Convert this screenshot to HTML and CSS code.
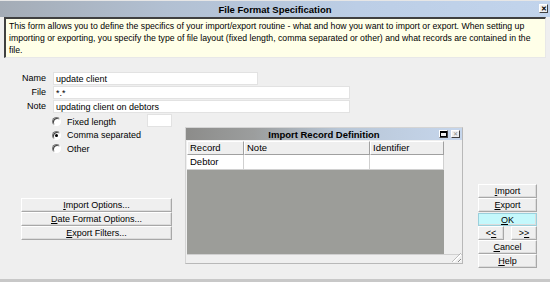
FILE: index.html
```html
<!DOCTYPE html>
<html>
<head>
<meta charset="utf-8">
<link rel="stylesheet" href="styles.css">
</head>
<body>
<div class="window">
  <div class="titlebar">
    <span class="title">File Format Specification</span>
    <span class="close">&#x2715;</span>
  </div>
  <div class="desc">This form allows you to define the specifics of your import/export routine - what and how you want to import or export. When setting up importing or exporting, you specify the type of file layout (fixed length, comma separated or other) and what records are contained in the file.</div>

  <div class="fields">
    <div class="frow"><span class="lbl">Name</span><span class="inp w-name">update client</span></div>
    <div class="frow"><span class="lbl">File</span><span class="inp w-long">*.*</span></div>
    <div class="frow"><span class="lbl">Note</span><span class="inp w-long">updating client on debtors</span></div>
  </div>

  <div class="lower">
    <div class="leftcol">
      <div class="radios">
        <div class="rrow"><span class="radio"></span><span class="rtext">Fixed length</span><span class="inp small"></span></div>
        <div class="rrow"><span class="radio on"></span><span class="rtext">Comma separated</span></div>
        <div class="rrow"><span class="radio"></span><span class="rtext">Other</span></div>
      </div>
      <div class="optbtns">
        <div class="btn"><u>I</u>mport Options...</div>
        <div class="btn"><u>D</u>ate Format Options...</div>
        <div class="btn"><u>E</u>xport Filters...</div>
      </div>
    </div>

    <div class="child">
      <div class="ctitle">
        <span class="ctext">Import Record Definition</span>
        <span class="cicons"><span class="ico restore"></span><span class="ico x">&#x2715;</span></span>
      </div>
      <div class="cbody">
        <div class="grid">
          <div class="ghead">
            <span class="c1">Record</span><span class="c2">Note</span><span class="c3">Identifier</span>
          </div>
          <div class="grow">
            <span class="c1">Debtor</span><span class="c2"></span><span class="c3"></span>
          </div>
          <div class="gempty"></div>
        </div>
        <div class="cfoot"><span class="grip"></span></div>
      </div>
    </div>

    <div class="rightcol">
      <div class="btn"><u>I</u>mport</div>
      <div class="btn"><u>E</u>xport</div>
      <div class="btn ok"><u>O</u>K</div>
      <div class="pair"><div class="btn half">&lt;<u>&lt;</u></div><div class="btn half">&gt;<u>&gt;</u></div></div>
      <div class="btn"><u>C</u>ancel</div>
      <div class="btn"><u>H</u>elp</div>
    </div>
  </div>
</div>
</body>
</html>
```

FILE: styles.css
```css
* { box-sizing: border-box; }
html, body { margin: 0; padding: 0; }
body {
  width: 550px;
  height: 282px;
  overflow: hidden;
  background: #efefef;
  font-family: "Liberation Sans", Arial, sans-serif;
  font-size: 9px;
  color: #000;
}
u { text-decoration: underline; }

.window {
  width: 550px;
  height: 282px;
  display: flex;
  flex-direction: column;
  background: #efefef;
  border-bottom: 3px solid #c8c8c8;
}

.titlebar {
  height: 17px;
  position: relative;
  display: flex;
  align-items: center;
  justify-content: center;
  background: linear-gradient(90deg, #a4acb6 0%, #b2c0d2 30%, #bccee6 65%, #c2d4ec 100%);
  border-top: 1px solid #e6e6e6;
}
.title {
  font-weight: bold;
  font-size: 9.5px;
}
.close {
  position: absolute;
  right: 2px;
  top: 3px;
  width: 9px;
  height: 9px;
  font-size: 7px;
  line-height: 8px;
  text-align: center;
  font-weight: bold;
  background: #efefef;
  border: 1px solid #404040;
  border-top-color: #fff;
  border-left-color: #fff;
}

.desc {
  margin: 0 4px;
  height: 41px;
  background: #ffffe8;
  border-top: 2px solid #404040;
  border-left: 2px solid #404040;
  border-right: 1px solid #e8e8e8;
  border-bottom: 1px solid #e8e8e8;
  padding: 1px 3px 0 3px;
  line-height: 12px;
  font-size: 8.7px;
}

.fields {
  margin-top: 13px;
  display: flex;
  flex-direction: column;
}
.frow {
  display: flex;
  align-items: center;
  height: 14px;
}
.lbl {
  width: 46px;
  text-align: right;
  margin-right: 7px;
}
.inp {
  display: block;
  height: 13px;
  line-height: 12px;
  background: #fff;
  border: 1px solid #e2e2e2;
  padding: 0 2px;
}
.w-name { width: 205px; }
.w-long { width: 297px; }

.lower {
  display: flex;
  align-items: flex-start;
  height: 154px;
}
.leftcol {
  width: 185px;
  display: flex;
  flex-direction: column;
}
.radios {
  padding: 2px 0 0 52px;
  display: flex;
  flex-direction: column;
}
.rrow {
  display: flex;
  align-items: center;
  height: 13.5px;
}
.radio {
  width: 9px;
  height: 9px;
  border-radius: 50%;
  background: #fff;
  border: 1px solid #fff;
  border-top-color: #7a7a7a;
  border-left-color: #7a7a7a;
  box-shadow: inset 1px 1px 0 #404040;
  margin-right: 6px;
  position: relative;
}
.radio.on::after {
  content: "";
  position: absolute;
  left: 2px;
  top: 2px;
  width: 3px;
  height: 3px;
  border-radius: 50%;
  background: #000;
}
.rtext { font-size: 9px; }
.inp.small {
  width: 25px;
  margin-left: auto;
  margin-right: 13px;
  margin-top: -3px;
}

.optbtns {
  margin: 42px 0 0 21px;
  width: 151px;
  display: flex;
  flex-direction: column;
}
.btn {
  height: 14px;
  line-height: 12px;
  text-align: center;
  background: #efefef;
  border: 1px solid #a8a8a8;
  border-top-color: #ffffff;
  border-left-color: #ffffff;
  box-shadow: inset -1px -1px 0 #dcdcdc;
}

.child {
  margin-top: 14px;
  width: 278px;
  height: 137px;
  display: flex;
  flex-direction: column;
  border: 1px solid #d4d4d4;
  border-right-color: #b8b8b8;
  border-bottom-color: #b8b8b8;
  background: #efefef;
}
.ctitle {
  height: 12px;
  position: relative;
  display: flex;
  align-items: center;
  justify-content: center;
  background: linear-gradient(90deg, #8c8c8a 0%, #9c9e9e 25%, #b8c6d6 55%, #c6d6ec 100%);
}
.ctext {
  font-weight: bold;
  font-size: 9.5px;
}
.cicons {
  position: absolute;
  right: 2px;
  top: 2px;
  display: flex;
  gap: 3px;
}
.ico {
  width: 9px;
  height: 8px;
  background: #efefef;
  border: 1px solid #404040;
  border-top-color: #fff;
  border-left-color: #fff;
  font-size: 6px;
  line-height: 6px;
  text-align: center;
  color: #8a8a8a;
}
.ico.restore {
  box-shadow: inset 0 2px 0 #000, inset 0 0 0 1px #000;
  border-color: #fff #404040 #404040 #fff;
}

.cbody {
  flex: 1;
  display: flex;
  flex-direction: column;
  padding: 1px 0 0 1px;
}
.grid {
  width: 257px;
  display: flex;
  flex-direction: column;
  height: 113px;
}
.ghead, .grow {
  display: flex;
  height: 14px;
}
.ghead span {
  background: #efefef;
  border: 1px solid #a0a0a0;
  border-top-color: #fff;
  border-left-color: #fff;
  line-height: 12px;
  padding-left: 2px;
  font-size: 9.5px;
}
.grow { height: 15px; }
.grow span {
  background: #fff;
  border-right: 1px solid #d0d0d0;
  border-bottom: 1px solid #d0d0d0;
  line-height: 14px;
  padding-left: 3px;
  font-size: 9.5px;
}
.c1 { width: 57px; }
.c2 { width: 126px; }
.c3 { width: 74px; }
.gempty {
  flex: 1;
  background: #9c9d99;
}
.cfoot {
  flex: 1;
  position: relative;
  border-top: 1px solid #d0d0d0;
}
.grip {
  position: absolute;
  right: 1px;
  bottom: 1px;
  width: 9px;
  height: 9px;
  background: repeating-linear-gradient(135deg, transparent 0 2px, #8a8a8a 2px 3px, #fff 3px 4px);
  clip-path: polygon(100% 0, 100% 100%, 0 100%);
}

.rightcol {
  margin: 71px 0 0 15px;
  width: 59px;
  display: flex;
  flex-direction: column;
}
.btn.ok {
  background: #c4f8fc;
  border: 1px solid #9ad0dc;
  margin: 1px 0 0;
  height: 13px;
}
.pair {
  display: flex;
  justify-content: space-between;
}
.btn.half { width: 26px; }
```
